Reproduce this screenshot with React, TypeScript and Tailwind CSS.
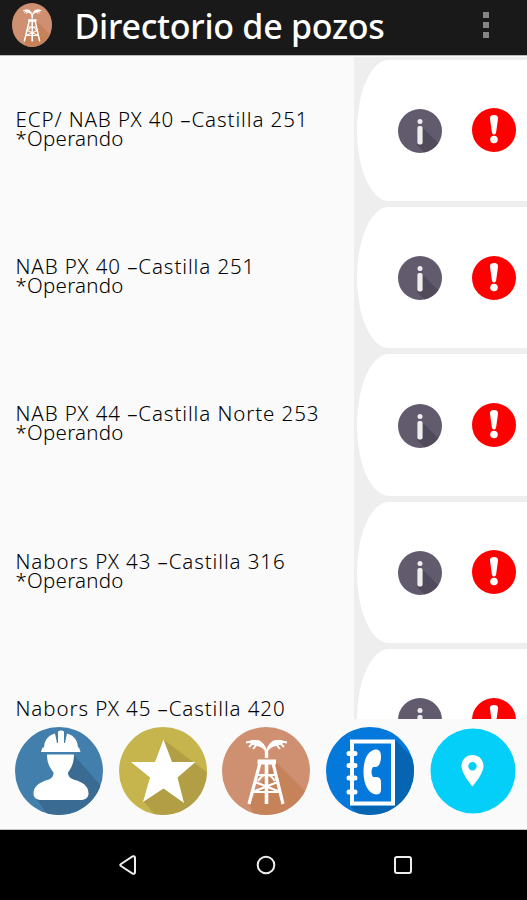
import type { ReactNode } from "react";

type Well = {
  name: string;
  status: string;
};

const wells: Well[] = [
  { name: "ECP/ NAB PX 40 –Castilla 251", status: "*Operando" },
  { name: "NAB PX 40 –Castilla 251", status: "*Operando" },
  { name: "NAB PX 44 –Castilla Norte 253", status: "*Operando" },
  { name: "Nabors PX 43 –Castilla 316", status: "*Operando" },
  { name: "Nabors PX 45 –Castilla 420", status: "*Operando" },
];

function DerrickMark() {
  return (
    <g fill="none" stroke="#fff" strokeLinecap="butt">
      <path d="M35.500 35h18.500" strokeWidth="5" />
      <path d="M38 36L27 77M51 36l10 41" strokeWidth="3.200" />
      <path d="M44.500 37v40" strokeWidth="3.600" />
      <path d="M32 54.500l25 10M57 54.500l-25 10M36 48h17M30 65h28M36 54q8.500-13 17 0" strokeWidth="2.200" />
      <path d="M44.500 31V23" strokeWidth="3.400" />
      <path
        d="M44.500 27c-1-5-5-8-12-9l-6-3c3-2 7-2 11-1 4 2 6 6 7 10 1-4 3-8 7-10 4-1 8-1 11 1l-6 3c-7 1-11 4-12 9z"
        fill="#fff"
        strokeWidth="1"
      />
      <path d="M32 14l-8 1.500M32 15l-5 5M36 16l-5 6M57 14l8 1.500M57 15l5 5M53 16l5 6" strokeWidth="1.900" />
    </g>
  );
}

function DerrickIcon({ className }: { className: string }) {
  return (
    <svg viewBox="0 0 88 88" preserveAspectRatio="none" className={className}>
      <clipPath id="derrick-clip">
        <circle cx="44" cy="44" r="44" />
      </clipPath>
      <circle cx="44" cy="44" r="44" fill="#cf9071" />
      <path d="M53 34l34 34v20H32l-5-11z" fill="#c68259" clipPath="url(#derrick-clip)" />
      <DerrickMark />
    </svg>
  );
}

function WorkerIcon() {
  return (
    <svg viewBox="0 0 88 88" className="size-[88px]">
      <clipPath id="worker-clip">
        <circle cx="44" cy="44" r="44" />
      </clipPath>
      <circle cx="44" cy="44" r="44" fill="#437fac" />
      <path d="M58 27l33 38v25H34L20 70z" fill="#396b93" clipPath="url(#worker-clip)" />
      <g fill="#fff">
        <path d="M29 22c0-8 3-13 11-15.500l2 9.500h1V4.500q3-2 6 0V16h1l2-9.500c8 2.500 11 7.500 11 15.500z" />
        <path d="M27.500 20.500h36.500l1.500 4.500h-39.500z" />
        <path d="M32 27.500h27c0 7-2 13-6 18 0 5 4 7 9 8 8 3 11.500 7 11.500 13 0 4-3 6.500-8 6.500h-39c-5 0-8-2.500-8-6.500 0-6 4-10 12-13 5-1 8-3 8-8-4-5-6.500-10-6.500-18z" />
      </g>
    </svg>
  );
}

function StarIcon() {
  return (
    <svg viewBox="0 0 88 88" className="size-[88px]">
      <clipPath id="star-clip">
        <circle cx="44" cy="44" r="44" />
      </clipPath>
      <circle cx="44" cy="44" r="44" fill="#c6b44d" />
      <path d="M45 13l44 33v44H38L25 75z" fill="#b29f45" clipPath="url(#star-clip)" />
      <path d="M44.500 12.500l8.500 22.500h23.500L58.500 50.500 65 76 44.500 61.500 24 75l7-24.500L12 35h24z" fill="#fff" />
    </svg>
  );
}

function PhonebookIcon() {
  return (
    <svg viewBox="0 0 88 88" className="size-[88px]">
      <clipPath id="phonebook-clip">
        <circle cx="44" cy="44" r="44" />
      </clipPath>
      <circle cx="44" cy="44" r="44" fill="#0579db" />
      <path d="M69 13l22 22v54H34L24 79h45z" fill="#0565b3" clipPath="url(#phonebook-clip)" />
      <path d="M26 14.500h41v62h-41z" fill="#0579db" stroke="#fff" strokeWidth="4" />
      <path d="M23 26.500h6M23 38.500h6M23 51h6M23 65h6" stroke="#fff" strokeWidth="5" strokeLinecap="round" />
      <path
        d="M49 22.500c4-.5 6 2 6 7 0 6-2 10-5 10.500h-3c-2 3-2 7 0 10h4q4 .5 4 5v8c0 3-2 4.500-5 4.500-8-1-12.500-11-12.500-22.500 0-12 4-21 11.500-22.500z"
        fill="#fff"
      />
    </svg>
  );
}

function PinIcon() {
  return (
    <svg viewBox="0 0 88 88" className="size-[88px]">
      <circle cx="44" cy="44" r="42.500" fill="#03cff9" />
      <path
        fillRule="evenodd"
        d="M43.500 28c-6.500 0-11 5-11 11 0 8 11 20.500 11 20.500s11-12.500 11-20.500c0-6-4.500-11-11-11zm0 7a4.200 4.200 0 1 1 0 8.400 4.200 4.200 0 0 1 0-8.400z"
        fill="#fff"
      />
    </svg>
  );
}

function InfoIcon() {
  return (
    <svg viewBox="0 0 44 44" className="size-11">
      <clipPath id="info-clip">
        <circle cx="22" cy="22" r="22" />
      </clipPath>
      <circle cx="22" cy="22" r="22" fill="#625a6d" />
      <path d="M25 19l20 20v6H28l-9-9z" fill="#514a5b" clipPath="url(#info-clip)" />
      <circle cx="22" cy="12.500" r="2.500" fill="#eee" />
      <rect x="19.400" y="17" width="5.200" height="18.500" rx="2" fill="#eee" />
    </svg>
  );
}

function AlertIcon() {
  return (
    <svg viewBox="0 0 44 44" className="size-11">
      <circle cx="22" cy="22" r="22" fill="#fe0000" />
      <path d="M22 7c3 0 4.400 1.500 4 4l-2 14q-2 3-4 0l-2-14c-.4-2.500 1-4 4-4z" fill="#fff" />
      <circle cx="22" cy="31.500" r="3.800" fill="#fff" />
    </svg>
  );
}

function WellRow({ well }: { well: Well }) {
  return (
    <li className="flex h-[147.400px] shrink-0">
      <div className="w-[354px] pt-[53px] pl-[15.500px] text-[20.500px] leading-[19px] whitespace-nowrap text-black">
        <p className="tracking-[0.900px]">{well.name}</p>
        <p className="tracking-[0.250px]">{well.status}</p>
      </div>
      <div className="flex-1 bg-[#eeeeee] py-[3px] pl-[3px]">
        <div className="flex h-full items-center gap-[30px] rounded-l-[32px_50%] bg-white pl-[41px]">
          <button className="pt-px" aria-label="Información"><InfoIcon /></button>
          <button aria-label="Alerta"><AlertIcon /></button>
        </div>
      </div>
    </li>
  );
}

function TabButton({ label, children }: { label: string; children: ReactNode }) {
  return (
    <button aria-label={label} className="size-[88px] shrink-0">
      {children}
    </button>
  );
}

export default function App() {
  return (
    <div className="flex h-[900px] w-[527px] flex-col overflow-hidden bg-[#fafafa] font-['Noto_Sans',sans-serif]">
      <header className="flex h-[56px] shrink-0 items-center border-b border-[#bcbcbc] bg-[#191919] pl-3">
        <DerrickIcon className="mb-[5px] h-[44px] w-[40px]" />
        <h1 className="mb-[4px] ml-[22.500px] text-[34px] leading-none font-medium tracking-[-0.280px] whitespace-nowrap text-white">
          Directorio de pozos
        </h1>
        <div className="mr-[38px] mb-[6px] ml-auto flex flex-col gap-1">
          <span className="size-1.5 bg-[#858585]" />
          <span className="size-1.5 bg-[#858585]" />
          <span className="size-1.5 bg-[#858585]" />
        </div>
      </header>

      <ul className="flex h-[663px] shrink-0 flex-col overflow-hidden pt-[0.600px] font-light">
        {wells.map((well) => (
          <WellRow key={well.name} well={well} />
        ))}
      </ul>

      <nav className="flex h-[111px] shrink-0 gap-[15.500px] border-b border-[#c4c4c4] pt-[8px] pl-[15px]">
        <TabButton label="Personal"><WorkerIcon /></TabButton>
        <TabButton label="Favoritos"><StarIcon /></TabButton>
        <TabButton label="Pozos"><DerrickIcon className="size-[88px]" /></TabButton>
        <TabButton label="Contactos"><PhonebookIcon /></TabButton>
        <TabButton label="Mapa"><PinIcon /></TabButton>
      </nav>

      <footer className="flex flex-1 items-center justify-center gap-[117.500px] bg-black pl-[4px]">
        <svg viewBox="0 0 20 20" className="size-5" fill="none" stroke="#eee" strokeWidth="2">
          <path d="M3 9Q1.500 10 3 11l11.500 7.500q2.500 1 2.500-1.500V3q0-2.500-2.500-1.500z" />
        </svg>
        <svg viewBox="0 0 20 20" className="size-5" fill="none" stroke="#eee" strokeWidth="2">
          <circle cx="10" cy="10" r="8.300" />
        </svg>
        <svg viewBox="0 0 20 20" className="size-5" fill="none" stroke="#eee" strokeWidth="2">
          <rect x="2" y="2" width="16" height="16" rx="2" />
        </svg>
      </footer>
    </div>
  );
}
